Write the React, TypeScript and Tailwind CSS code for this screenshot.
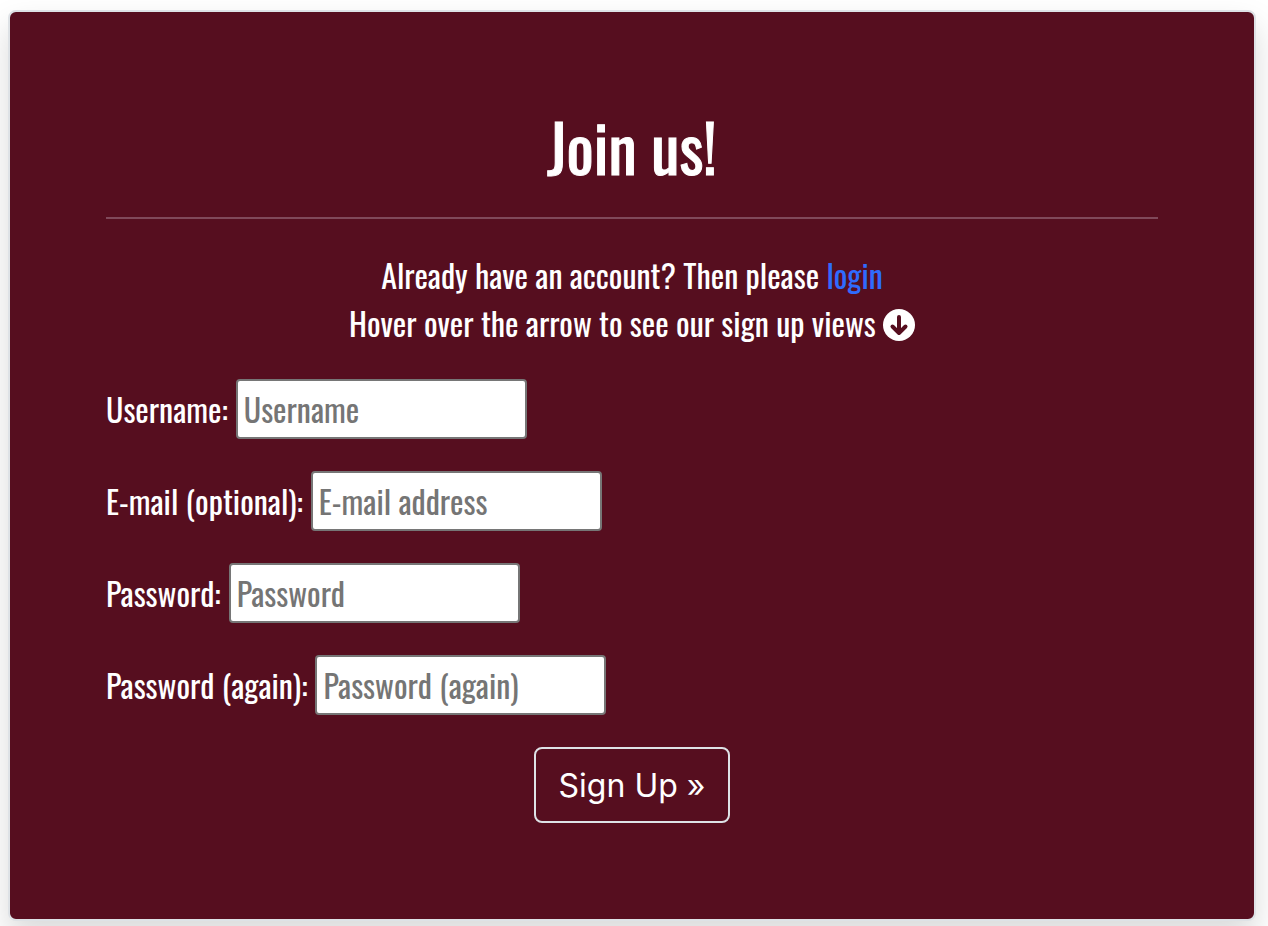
const fields = [
  { id: "username", label: "Username:", placeholder: "Username", type: "text" },
  { id: "email", label: "E-mail (optional):", placeholder: "E-mail address", type: "email" },
  { id: "password1", label: "Password:", placeholder: "Password", type: "password" },
  { id: "password2", label: "Password (again):", placeholder: "Password (again)", type: "password" },
];

function ArrowDownCircle() {
  return (
    <svg viewBox="0 0 512 512" aria-hidden="true" className="inline size-8 align-[-4px]">
      <circle cx="256" cy="256" r="256" fill="currentColor" />
      <path
        d="M256 128V384M152 280L256 384L360 280"
        fill="none"
        stroke="#560e1f"
        strokeWidth="64"
        strokeLinecap="round"
        strokeLinejoin="round"
      />
    </svg>
  );
}

export default function App() {
  return (
    <main className="bg-white pt-[10px] pr-3 pb-[5px] pl-2">
      <section className="rounded-lg border-2 border-[#dee2e6] bg-[#560e1f] p-24 font-['Oswald','Liberation_Sans_Narrow','Liberation_Sans',sans-serif] text-[32px] leading-[48px] font-normal text-white shadow-[0_16px_32px_rgba(0,0,0,0.15)]">
        <h1 className="text-center text-[64px] leading-[77px] [-webkit-text-stroke:1px_currentColor]">Join us!</h1>
        <hr className="my-8 border-t-2 border-[#80495a]" />
        <p className="text-center">
          Already have an account? Then please{" "}
          <a href="#login" className="text-[#2f6bfd]">login</a>
          <br />
          Hover over the arrow to see our sign up views{" "}
          <ArrowDownCircle />
        </p>
        <form className="mt-8 flex flex-col gap-8" onSubmit={(e) => e.preventDefault()}>
          {fields.map((f) => (
            <div key={f.id} className="flex items-center gap-2">
              <label htmlFor={f.id}>{f.label}</label>
              <input
                id={f.id}
                type={f.type}
                placeholder={f.placeholder}
                className="h-[60px] w-[291px] rounded border-2 border-[#767676] bg-white px-[6px] pb-[2px] text-black placeholder:text-[#757575]"
              />
            </div>
          ))}
          <button
            type="submit"
            className="h-[76px] self-center rounded-lg border-2 border-[#dee2e6] px-[23px] pt-[2px] font-['Inter',sans-serif]"
          >
            Sign Up »
          </button>
        </form>
      </section>
    </main>
  );
}
